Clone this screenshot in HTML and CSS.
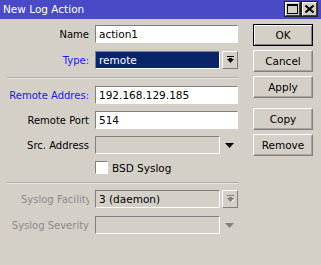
FILE: index.html
```html
<!DOCTYPE html>
<html>
<head>
<meta charset="utf-8">
<link rel="stylesheet" href="styles.css">
</head>
<body>
<div class="window">
  <div class="titlebar">
    <span class="title">New Log Action</span>
    <div class="tb-buttons">
      <span class="tb-btn"><svg width="11" height="10" viewBox="0 0 11 10"><rect x="0.5" y="0.5" width="10" height="9" fill="none" stroke="#000"/><rect x="0" y="0" width="11" height="2" fill="#000"/></svg></span>
      <span class="tb-btn"><svg width="9" height="8" viewBox="0 0 9 8"><path d="M0.5 0.5 L8.5 7.5 M8.5 0.5 L0.5 7.5" stroke="#000" stroke-width="2" fill="none"/></svg></span>
    </div>
  </div>
  <div class="content">
    <div class="form">
      <div class="row r-name">
        <label class="lbl">Name</label>
        <div class="field input">action1</div>
      </div>
      <div class="row r-type">
        <label class="lbl blue">Type:</label>
        <div class="field select selected">remote</div>
        <span class="drop-btn"><svg width="9" height="9" viewBox="0 0 9 9"><rect x="1" y="0" width="7" height="1" fill="#000"/><path d="M1 3 H8 L4.5 7 Z" fill="#000"/><rect x="3" y="2" width="3" height="2" fill="#000"/></svg></span>
      </div>
      <div class="sep"></div>
      <div class="row r-addr">
        <label class="lbl blue">Remote Addres:</label>
        <div class="field input">192.168.129.185</div>
      </div>
      <div class="row r-port">
        <label class="lbl">Remote Port</label>
        <div class="field input">514</div>
      </div>
      <div class="row r-src">
        <label class="lbl">Src. Address</label>
        <div class="field select disabled"></div>
        <span class="arrow"><svg width="9" height="5" viewBox="0 0 9 5"><path d="M0 0 H9 L4.5 5 Z" fill="#000"/></svg></span>
      </div>
      <div class="row r-check">
        <span class="lbl"></span>
        <span class="checkbox"></span>
        <span class="check-label">BSD Syslog</span>
      </div>
      <div class="sep sep2"></div>
      <div class="row r-fac">
        <label class="lbl gray clip">Syslog Facility</label>
        <div class="field select disabled">3 (daemon)</div>
        <span class="drop-btn dis"><svg width="9" height="9" viewBox="0 0 9 9"><rect x="1" y="0" width="7" height="1" fill="#808080"/><path d="M1 3 H8 L4.5 7 Z" fill="#808080"/><rect x="3" y="2" width="3" height="2" fill="#808080"/><path d="M5.5 7 L8 4.5" stroke="#fff" stroke-width="1"/></svg></span>
      </div>
      <div class="row r-sev">
        <label class="lbl gray">Syslog Severity</label>
        <div class="field select disabled"></div>
        <span class="arrow"><svg width="9" height="5" viewBox="0 0 9 5"><path d="M0 0 H9 L4.5 5 Z" fill="#808080"/></svg></span>
      </div>
    </div>
    <div class="buttons">
      <button class="btn default">OK</button>
      <button class="btn">Cancel</button>
      <button class="btn">Apply</button>
      <button class="btn b-copy">Copy</button>
      <button class="btn">Remove</button>
    </div>
  </div>
</div>
</body>
</html>
```
FILE: styles.css
```css
* { box-sizing: border-box; }
html, body {
  margin: 0;
  padding: 0;
  background: #d4d0c8;
  width: 321px;
  height: 265px;
  overflow: hidden;
  font-family: "DejaVu Sans", sans-serif;
  font-size: 10px;
  color: #000;
}
.window { width: 321px; height: 265px; }
.titlebar {
  height: 19px;
  background: #4a4ac6;
  display: flex;
  align-items: center;
  justify-content: space-between;
  padding: 0 4px 0 3px;
}
.title {
  color: #fff;
  font-size: 10.5px;
  line-height: 19px;
}
.tb-buttons { display: flex; gap: 2px; margin-top: -2px; }
.tb-btn {
  width: 15px;
  height: 14px;
  background: #d4d0c8;
  border: 1px solid #404040;
  border-top-color: #fff;
  border-left-color: #fff;
  display: flex;
  align-items: center;
  justify-content: center;
  outline: 1px solid #202020;
}
.content {
  display: flex;
  padding: 6px 0 0 7px;
}
.form { width: 232px; display: flex; flex-direction: column; }
.row { display: flex; align-items: center; height: 18px; }
.lbl {
  width: 82px;
  margin-right: 6px;
  text-align: right;
  white-space: nowrap;
  flex: none;
}
.lbl.clip { overflow: hidden; text-align: left; padding-left: 14px; }
.blue { color: #1a1ae8; }
.gray { color: #8a8a8a; }
.field {
  height: 18px;
  border: 1px solid #fff;
  border-top-color: #808080;
  border-left-color: #808080;
  background: #fff;
  padding: 0 3px;
  font-size: 10.5px;
  line-height: 16px;
  white-space: nowrap;
  overflow: hidden;
}
.input { width: 143px; }
.select { width: 125px; }
.selected {
  background: #0a246a;
  color: #fff;
}
.disabled { background: #d4d0c8; }
.drop-btn {
  width: 16px;
  height: 18px;
  margin-left: 2px;
  border: 1px solid #808080;
  border-top-color: #fff;
  border-left-color: #fff;
  display: flex;
  align-items: center;
  justify-content: center;
}
.arrow { margin-left: 5px; display: flex; align-items: center; }
.r-name { margin-bottom: 8px; }
.r-type { margin-bottom: 8px; }
.sep {
  height: 2px;
  border-top: 1px solid #b0aca4;
  border-bottom: 1px solid #e8e6e0;
  width: 231px;
}
.r-addr { margin-top: 7px; margin-bottom: 7px; }
.r-port { margin-bottom: 7px; }
.r-src { margin-bottom: 7px; }
.r-check { height: 13px; }
.checkbox {
  width: 13px;
  height: 13px;
  background: #fff;
  border: 1px solid #fff;
  border-top-color: #808080;
  border-left-color: #808080;
}
.check-label { margin-left: 4px; font-size: 10.5px; }
.sep2 { margin-top: 8px; }
.r-fac { margin-top: 6px; margin-bottom: 8px; }
.buttons {
  display: flex;
  flex-direction: column;
  margin-left: 14px;
  margin-top: -1px;
}
.btn {
  width: 60px;
  height: 22px;
  margin: 0 0 4px 0;
  padding: 0;
  background: #d4d0c8;
  border: 1px solid #808080;
  border-top-color: #fff;
  border-left-color: #fff;
  box-shadow: inset -1px -1px 0 #a8a49c;
  font-family: "DejaVu Sans", sans-serif;
  font-size: 10.5px;
  color: #000;
}
.btn.default {
  border: 1px solid #000;
  box-shadow: inset 1px 1px 0 #fff, inset -1px -1px 0 #808080;
}
.b-copy { margin-top: 6px; }
```
